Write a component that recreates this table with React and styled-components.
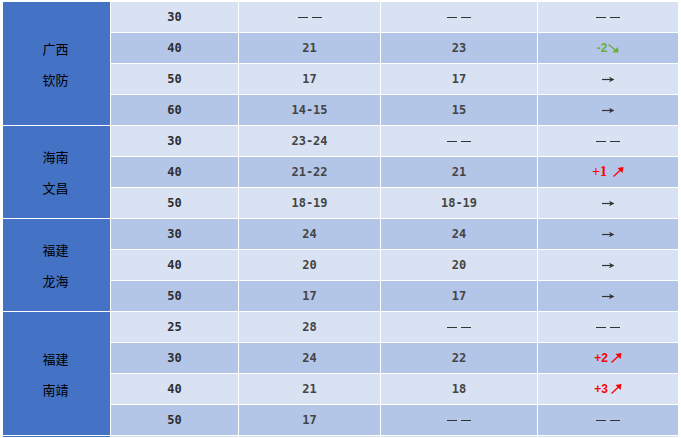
import React from "react";
import styled, { createGlobalStyle } from "styled-components";

const GlobalStyle = createGlobalStyle`
  html, body {
    margin: 0;
    padding: 0;
    height: 100%;
    overflow: hidden;
    background: #ffffff;
  }
`;

const Table = styled.table`
  table-layout: fixed;
  border-collapse: separate;
  border-spacing: 1px;
  margin: 1px 0 0 2px;
  background: #ffffff;
`;

const RegionCell = styled.td`
  width: 107px;
  padding: 0;
  background: #4472c4;
  text-align: center;
  vertical-align: middle;
  font-family: "Noto Sans CJK SC", "Noto Sans", sans-serif;
  font-size: 13px;
  color: #000000;
`;

const RegionLine = styled.div`
  line-height: 31px;
  padding-right: 2px;
`;

const Cell = styled.td`
  width: ${({ w }) => w}px;
  height: ${({ h }) => h}px;
  padding: 0;
  box-sizing: border-box;
  background: ${({ even }) => (even ? "#b4c6e7" : "#d9e2f3")};
  text-align: center;
  vertical-align: middle;
  font-family: "DejaVu Sans Mono", "Liberation Mono", monospace;
  font-weight: bold;
  font-size: 12px;
  color: ${({ dark }) => (dark ? "#2f2f2f" : "#444444")};
`;

const Dashes = styled.span`
  display: inline-flex;
  gap: 4px;
  vertical-align: middle;
  & > i {
    display: block;
    width: 10px;
    height: 1px;
    background: #333333;
  }
`;

const Delta = styled.span`
  display: inline-flex;
  align-items: center;
  gap: ${({ gap }) => gap}px;
  color: ${({ up }) => (up ? "#ff0000" : "#6aaf3a")};
  font-family: ${({ serif }) =>
    serif ? '"Liberation Serif", serif' : '"Liberation Sans", sans-serif'};
  font-size: ${({ serif }) => (serif ? 14 : 12)}px;
  font-weight: bold;
`;

const Dash = () => (
  <Dashes>
    <i />
    <i />
  </Dashes>
);

const FlatArrow = () => (
  <svg width="13" height="7" viewBox="0 0 13 7" style={{ verticalAlign: "middle" }}>
    <line x1="0" y1="3.5" x2="9" y2="3.5" stroke="#333" strokeWidth="1.2" />
    <path d="M7 0.8 L12.5 3.5 L7 6.2 L8.5 3.5 Z" fill="#333" />
  </svg>
);

const UpArrow = () => (
  <svg width="11" height="10" viewBox="0 0 11 10">
    <line x1="0.5" y1="9.5" x2="8" y2="2.5" stroke="#ff0000" strokeWidth="1.3" />
    <path d="M4.5 1 L10.5 0 L9.5 6 Z" fill="#ff0000" />
  </svg>
);

const DownArrow = () => (
  <svg width="11" height="9" viewBox="0 0 11 9">
    <line x1="0.5" y1="0.5" x2="8" y2="6.5" stroke="#6aaf3a" strokeWidth="1.3" />
    <path d="M10.5 8.5 L4 8.5 L10 3 Z" fill="#6aaf3a" />
  </svg>
);

const renderValue = (v) => (v === "-" ? <Dash /> : v);

const renderChange = (c) => {
  if (c === "-") return <Dash />;
  if (c === ">") return <FlatArrow />;
  if (c.startsWith("+"))
    return (
      <Delta up gap={c === "+1" ? 6 : 3} serif={c === "+1"}>
        {c}
        <UpArrow />
      </Delta>
    );
  return (
    <Delta gap={1}>
      {c}
      <DownArrow />
    </Delta>
  );
};

const groups = [
  {
    name: ["广西", "钦防"],
    rows: [
      ["30", "-", "-", "-"],
      ["40", "21", "23", "-2"],
      ["50", "17", "17", ">"],
      ["60", "14-15", "15", ">"],
    ],
  },
  {
    name: ["海南", "文昌"],
    rows: [
      ["30", "23-24", "-", "-"],
      ["40", "21-22", "21", "+1"],
      ["50", "18-19", "18-19", ">"],
    ],
  },
  {
    name: ["福建", "龙海"],
    rows: [
      ["30", "24", "24", ">"],
      ["40", "20", "20", ">"],
      ["50", "17", "17", ">"],
    ],
  },
  {
    name: ["福建", "南靖"],
    rows: [
      ["25", "28", "-", "-"],
      ["30", "24", "22", "+2"],
      ["40", "21", "18", "+3"],
      ["50", "17", "-", "-"],
    ],
  },
  {
    // next group, only its top edge shows at the bottom of the view
    name: [],
    cut: true,
    rows: [["", "", "", ""]],
  },
];

const widths = [127, 141, 156, 140];

export default function App() {
  let index = 0;
  return (
    <>
      <GlobalStyle />
      <Table>
        <tbody>
          {groups.map((g, gi) =>
            g.rows.map((r, ri) => {
              index += 1;
              const even = index % 2 === 0;
              const h = g.cut ? 1 : 30;
              return (
                <tr key={`${gi}-${ri}`}>
                  {ri === 0 && (
                    <RegionCell rowSpan={g.rows.length}>
                      {g.name.map((n) => (
                        <RegionLine key={n}>{n}</RegionLine>
                      ))}
                    </RegionCell>
                  )}
                  <Cell w={widths[0]} h={h} even={even} dark>
                    {r[0]}
                  </Cell>
                  <Cell w={widths[1]} h={h} even={even}>
                    {renderValue(r[1])}
                  </Cell>
                  <Cell w={widths[2]} h={h} even={even}>
                    {renderValue(r[2])}
                  </Cell>
                  <Cell w={widths[3]} h={h} even={even}>
                    {r[3] ? renderChange(r[3]) : null}
                  </Cell>
                </tr>
              );
            })
          )}
        </tbody>
      </Table>
    </>
  );
}
